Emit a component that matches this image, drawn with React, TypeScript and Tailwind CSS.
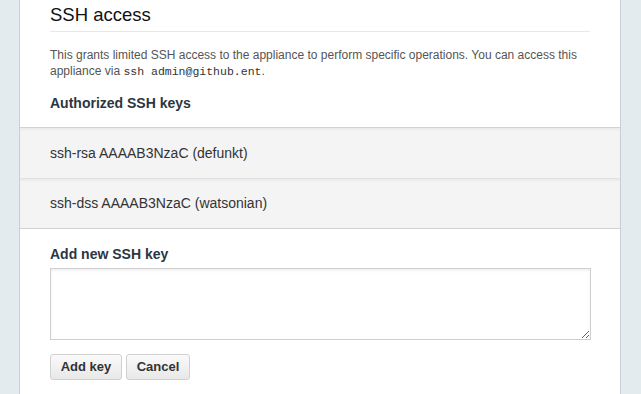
export default function App() {
  const keys = ['ssh-rsa AAAAB3NzaC (defunkt)', 'ssh-dss AAAAB3NzaC (watsonian)'];

  return (
    <div
      className="h-[394px] w-[641px] overflow-hidden bg-[#e4ebee]"
      style={{ fontFamily: '"Liberation Sans", Arial, sans-serif' }}
    >
      <div className="ml-[19px] h-full w-[602px] border-x border-[#cbcfd2] bg-white">
        {/* Section header */}
        <div className="px-[30px]">
          <h2 className="pt-[3px] pb-[4px] text-[18.5px] leading-[24px] text-[#111] border-b border-[#e8e8e8]">
            SSH access
          </h2>
          <p className="mt-[15px] text-[12px] leading-[16px] text-[#555]">
            This grants limited SSH access to the appliance to perform specific operations. You can access this
            appliance via{' '}
            <code
              className="inline-block text-[11.5px] leading-[16px] text-[#333]"
              style={{ fontFamily: '"Liberation Mono", monospace' }}
            >
              ssh admin@github.ent
            </code>
            <span>.</span>
          </p>
          <h3 className="mt-[15px] text-[14px] leading-[16px] font-bold text-[#2b3641]">Authorized SSH keys</h3>
        </div>

        {/* Key list */}
        <ul className="mt-[16px] border-y border-[#d2d2d2]">
          {keys.map((k, i) => (
            <li
              key={k}
              className={
                'h-[50px] flex items-center px-[30px] bg-[#f4f4f4] text-[14px] text-[#333] shadow-[inset_0_2px_2px_rgba(0,0,0,0.04)] ' +
                (i > 0 ? 'border-t border-[#e2e2e2]' : '')
              }
            >
              {k}
            </li>
          ))}
        </ul>

        {/* Add key form */}
        <div className="px-[30px] pt-[17px]">
          <label className="block text-[14px] leading-[16px] font-bold text-[#2b3641]">Add new SSH key</label>
          <textarea className="mt-[6px] block h-[72px] w-[541px] border border-[#cfcfcf] bg-white shadow-[inset_0_2px_3px_rgba(0,0,0,0.06)] outline-none" />
          <div className="mt-[14px] flex gap-[4px]">
            <button className="h-[26px] w-[72px] rounded-[3px] border border-[#d0d0d0] bg-gradient-to-b from-[#fafafa] to-[#e8e8e8] text-[13px] font-bold text-[#333]">
              Add key
            </button>
            <button className="h-[26px] w-[64px] rounded-[3px] border border-[#d0d0d0] bg-gradient-to-b from-[#fafafa] to-[#e8e8e8] text-[13px] font-bold text-[#333]">
              Cancel
            </button>
          </div>
        </div>
      </div>
    </div>
  );
}
